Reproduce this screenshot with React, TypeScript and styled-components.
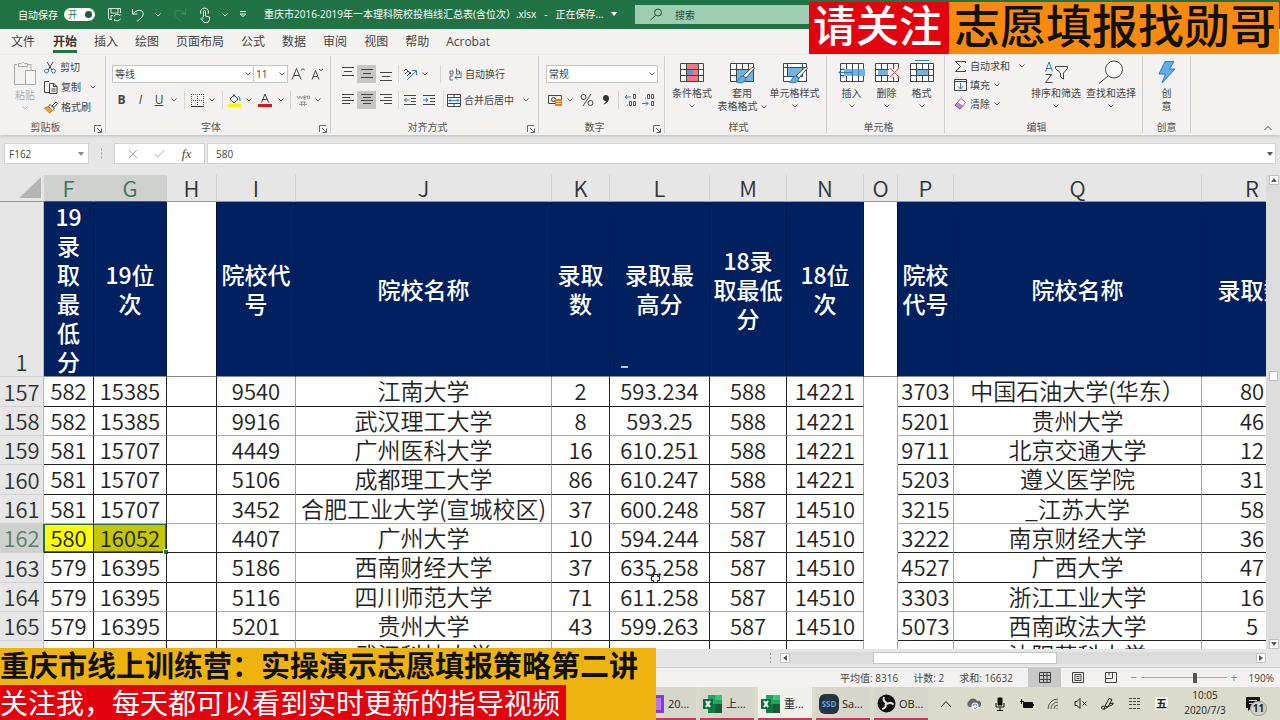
import React from "react";
import styled, { createGlobalStyle, css } from "styled-components";

const UI = '"Open Sans", "Noto Sans CJK SC", sans-serif';
const SHEET = '"Noto Sans CJK SC", "Noto Sans", sans-serif';

const Global = createGlobalStyle`
  *, *::before, *::after { box-sizing: border-box; }
  body { margin: 0; background: #e6e6e6; font-family: ${UI}; color: #444; }
  button, input, select { font: inherit; color: inherit; margin: 0; padding: 0; border: 0; background: none; border-radius: 0; }
  svg { display: block; flex: none; }
`;

const Shell = styled.div`
  position: relative;
  display: flex;
  flex-direction: column;
  height: 100vh;
  min-height: 480px;
  overflow: hidden;
  font-size: 10px;
  line-height: 14px;
`;

/* ---------- title bar ---------- */
const TitleBar = styled.header`
  flex: none;
  display: flex;
  align-items: center;
  height: 29px;
  padding-left: 18px;
  background: #217346;
  color: #fff;
  white-space: nowrap;
`;
const AutoSave = styled.label`
  display: flex;
  align-items: center;
  gap: 6px;
  margin-right: 8px;
`;
const Switch = styled.span`
  position: relative;
  display: flex;
  align-items: center;
  width: 31px;
  height: 13px;
  padding-left: 4px;
  border-radius: 7px;
  background: #fff;
  color: #217346;
  font-size: 9px;
  input {
    position: absolute;
    right: 3px;
    top: 3px;
    width: 7px;
    height: 7px;
    appearance: none;
    border-radius: 50%;
    background: #1d5c3a;
  }
`;
const TitleButton = styled.button<{ $w: number; $dim?: boolean }>`
  display: flex;
  align-items: center;
  justify-content: center;
  width: ${(p) => p.$w}px;
  height: 20px;
  opacity: ${(p) => (p.$dim ? 0.15 : 1)};
`;
const FileTitle = styled.h1`
  flex: none;
  display: flex;
  align-items: center;
  gap: 8px;
  width: 384px;
  margin: 0;
  padding: 0 0 2px 13px;
  font-size: 10px;
  font-weight: 400;
`;
const Search = styled.label`
  flex: 1;
  display: flex;
  align-items: center;
  gap: 12px;
  max-width: 560px;
  height: 19px;
  padding-left: 15px;
  background: #9fcdb3;
  color: #1e4d34;
  input { width: 100%; outline: 0; }
  input::placeholder { color: #1e4d34; opacity: 1; }
`;

/* ---------- ribbon ---------- */
const Tabs = styled.nav`
  flex: none;
  display: flex;
  gap: 1px;
  height: 26px;
  padding-left: 3px;
  background: #f3f2f1;
`;
const Tab = styled.button<{ $on?: boolean }>`
  position: relative;
  padding: 0 8px 1px;
  font-size: 12px;
  line-height: 24px;
  ${(p) =>
    p.$on &&
    css`
      font-weight: 700;
      color: #333;
      &::after {
        content: "";
        position: absolute;
        left: 8px;
        right: 8px;
        bottom: 2px;
        height: 3px;
        background: #217346;
      }
    `}
  &:first-child { margin-right: 1px; }
`;
const Ribbon = styled.section`
  flex: none;
  position: relative;
  display: flex;
  height: 80px;
  padding-top: 1px;
  background: #f3f2f1;
  box-shadow: 0 1px 3px #bbb;
`;
const Group = styled.div<{ $w: number }>`
  flex: none;
  position: relative;
  display: flex;
  flex-direction: column;
  width: ${(p) => p.$w}px;
  height: 77px;
  border-right: 1px solid #cfcecd;
`;
const GroupBody = styled.div<{ $pad: number }>`
  flex: 1;
  display: flex;
  min-height: 0;
  padding-left: ${(p) => p.$pad}px;
`;
const GroupName = styled.div<{ $narrow?: boolean }>`
  flex: none;
  height: 14px;
  margin-bottom: -1px;
  padding-right: ${(p) => (p.$narrow ? 0 : 14)}px;
  text-align: center;
  color: #555;
`;
const Launcher = styled.button`
  position: absolute;
  right: 3px;
  bottom: 0;
  width: 8px;
  height: 8px;
`;
const Collapse = styled.button`
  margin: auto 8px 4px auto;
`;
const Stack = styled.div<{ $top: number; $gap: number }>`
  display: flex;
  flex-direction: column;
  gap: ${(p) => p.$gap}px;
  padding-top: ${(p) => p.$top}px;
`;
const Row = styled.div`
  display: flex;
  align-items: center;
  height: 18px;
`;
const Tool = styled.button<{ $w: number; $on?: boolean }>`
  display: flex;
  align-items: center;
  justify-content: center;
  width: ${(p) => p.$w}px;
  height: 18px;
  background: ${(p) => (p.$on ? "#c6c5c4" : "none")};
  font-size: 12px;
`;
const LineTool = styled.button<{ $wide?: boolean }>`
  display: flex;
  align-items: center;
  gap: 3px;
  height: 18px;
  white-space: nowrap;
  > svg:nth-of-type(2) { margin-left: ${(p) => (p.$wide ? 6 : 1)}px; }
`;
const Rule = styled.span<{ $w: number }>`
  width: ${(p) => p.$w}px;
  height: 18px;
  background: linear-gradient(#d8d7d6, #d8d7d6) center / 1px 100% no-repeat;
`;
const BigTool = styled.button<{ $w: number; $dim?: boolean }>`
  display: flex;
  flex-direction: column;
  align-items: center;
  width: ${(p) => p.$w}px;
  padding-top: 4px;
  white-space: nowrap;
  line-height: 13px;
  opacity: ${(p) => (p.$dim ? 0.4 : 1)};
  > svg:first-child { margin-bottom: 3px; }
  > svg:last-child { margin-top: 4px; }
  span span { display: inline-flex; vertical-align: middle; margin-left: 3px; }
`;
const Picker = styled.label<{ $w: number }>`
  position: relative;
  display: flex;
  align-items: center;
  width: ${(p) => p.$w}px;
  height: 18px;
  border: 1px solid #c8c6c4;
  background: #fff;
  & + & { border-left: 0; }
  select {
    width: 100%;
    height: 16px;
    padding-left: 2px;
    appearance: none;
    outline: 0;
  }
  svg { position: absolute; right: 2px; pointer-events: none; }
`;

/* ---------- formula bar ---------- */
const FormulaBar = styled.section`
  flex: none;
  display: flex;
  height: 40px;
  padding: 8px 4px 11px;
`;
const White = styled.div<{ $w?: number }>`
  display: flex;
  align-items: center;
  flex: ${(p) => (p.$w ? "none" : "1")};
  width: ${(p) => (p.$w ? p.$w + "px" : "auto")};
  padding: 0 4px;
  border: 1px solid #d2d2d2;
  background: #fff;
  input { flex: 1; min-width: 0; outline: 0; }
`;
const FormulaBox = styled(White)`
  margin-left: 2px;
  padding: 0 2px 0 8px;
`;
const Grip = styled.div`
  width: 25px;
  margin: 4px 0;
  background: radial-gradient(circle, #a5a5a5 1px, transparent 1px) center / 25px 4px;
`;
const FxButton = styled.button`
  display: flex;
  justify-content: center;
  width: 30px;
`;
const Fx = styled.i`
  font-family: "Liberation Serif", serif;
  font-size: 13px;
`;

/* ---------- sheet ---------- */
const SheetArea = styled.main`
  flex: 1;
  display: flex;
  min-height: 0;
`;
const SheetView = styled.div`
  flex: 1;
  min-width: 0;
  overflow: hidden;
`;
const Grid = styled.table`
  width: 1303px;
  table-layout: fixed;
  border-collapse: separate;
  border-spacing: 0;
  background: #fff;
  color: #222;
  font-family: ${SHEET};
  font-size: 23px;
  font-weight: 350;
  line-height: 27px;
  white-space: nowrap;
  text-align: center;
`;
const ColHead = styled.th<{ $sel?: boolean }>`
  height: 27px;
  padding: 0;
  border-right: 1px solid #d0d0d0;
  border-bottom: 1px solid ${(p) => (p.$sel ? "#217346" : "#999")};
  background: ${(p) => (p.$sel ? "#cfd1cf" : "#e6e6e6")};
  color: ${(p) => (p.$sel ? "#41705a" : "#333")};
  font-size: 22px;
  font-weight: 350;
  line-height: 24px;
  vertical-align: top;
`;
const Corner = styled(ColHead)`
  border-right: 0;
  vertical-align: middle;
  svg { margin: 0 2px 0 auto; }
`;
const RowHead = styled.th<{ $sel?: boolean }>`
  padding: 0 0 1px;
  border-right: 1px solid ${(p) => (p.$sel ? "#217346" : "#bbb")};
  border-bottom: 1px solid #d0d0d0;
  background: ${(p) => (p.$sel ? "#cfd1cf" : "#e6e6e6")};
  color: ${(p) => (p.$sel ? "#5c7f6d" : "#333")};
  font-weight: 350;
  font-size: 22px;
  vertical-align: bottom;
`;
const Field = styled.th<{ $blank?: boolean }>`
  position: relative;
  height: 175px;
  padding: 0;
  border-right: 1px solid ${(p) => (p.$blank ? "#001030" : "#001a4c")};
  border-bottom: 1px solid #888;
  background: ${(p) => (p.$blank ? "#fff" : "#002060")};
  color: #fff;
  font-weight: 500;
  line-height: 29px;
  white-space: pre-line;
`;
const Dash = styled.i`
  position: absolute;
  left: 11px;
  bottom: 8px;
  width: 7px;
  height: 2px;
  background: #b8c6e0;
`;
const Cell = styled.td<{ $soft?: boolean; $num?: boolean; $open?: boolean }>`
  position: relative;
  padding: 0;
  border-right: 1px solid ${(p) => (p.$soft ? "#a4a4a4" : "#222")};
  border-bottom: 1px solid ${(p) => (p.$open ? "transparent" : "#222")};
  font-size: ${(p) => (p.$num ? 22 : 23)}px;
  vertical-align: top;
`;
const Line = styled.tr`
  height: 29px;
  &:nth-child(3n + 1) { height: 30px; }
  &:nth-child(3n + 2) td { border-bottom-color: #aaa; }
  &:nth-child(3n + 2) td:nth-child(11) { border-bottom-color: transparent; }
`;
const ActiveCell = styled(Cell)`
  background: #ff0;
  box-shadow: inset 1px 1px #217346, inset 0 -1px #217346;
`;
const PickedCell = styled(Cell)`
  background: #c6c600;
  box-shadow: inset 0 1px #217346, inset -1px -1px #217346;
  &::after {
    content: "";
    position: absolute;
    right: -2px;
    bottom: -2px;
    width: 4px;
    height: 4px;
    background: #217346;
    outline: 1px solid #fff;
  }
`;
const Pointer = styled.svg`
  position: absolute;
  left: 40px;
  top: 20px;
  z-index: 1;
`;
const VScroll = styled.div`
  flex: none;
  display: flex;
  flex-direction: column;
  align-items: center;
  width: 14px;
  padding-left: 1px;
  background: #dcdcdc;
`;
const ScrollButton = styled.button`
  flex: none;
  display: flex;
  align-items: center;
  justify-content: center;
  width: 10px;
  height: 10px;
  border: 1px solid #c0c0c0;
  background: #fff;
`;
const VTrack = styled.div`
  flex: 1;
  display: flex;
  padding-top: 186px;
  &::before {
    content: "";
    width: 9px;
    height: 10px;
    border: 1px solid #bbb;
    background: #fff;
  }
`;
const HScroll = styled.div`
  flex: none;
  display: flex;
  align-items: center;
  height: 19px;
  padding-right: 14px;
  border-bottom: 1px solid #cfcfcf;
`;
const HGrip = styled.span`
  flex: none;
  width: 61%;
  margin-right: 8px;
  height: 12px;
  background: radial-gradient(circle, #999 1px, transparent 1px) right center / 3px 4px repeat-y;
`;
const HTrack = styled.div`
  flex: 1;
  height: 12px;
  padding-left: 83px;
  background: #dcdcdc;
  &::before {
    content: "";
    display: block;
    width: 48%;
    height: 12px;
    border: 1px solid #c4c4c4;
    background: #fff;
  }
`;

/* ---------- status bar ---------- */
const Status = styled.footer`
  flex: none;
  display: flex;
  justify-content: flex-end;
  align-items: center;
  height: 19px;
  padding-right: 6px;
  background: #f3f2f1;
  white-space: nowrap;
`;
const Stat = styled.span`
  margin-right: 15px;
`;
const ViewButton = styled.button<{ $on?: boolean }>`
  display: flex;
  align-items: center;
  justify-content: center;
  width: 33px;
  height: 19px;
  background: ${(p) => (p.$on ? "#c8c8c8" : "none")};
`;
const ZoomStep = styled.button`
  width: 14px;
  font-size: 12px;
  color: #888;
`;
const Zoom = styled.input`
  width: 86px;
  height: 12px;
  appearance: none;
  background: linear-gradient(#aaa, #aaa) center / 100% 1px no-repeat;
  &::-webkit-slider-thumb { appearance: none; width: 4px; height: 10px; background: #555; }
`;
const Percent = styled.output`
  width: 33px;
  text-align: right;
`;

/* ---------- taskbar ---------- */
const Taskbar = styled.nav`
  flex: none;
  display: flex;
  justify-content: flex-end;
  height: 33px;
  background: #dadbcb;
  color: #222;
`;
const TaskButton = styled.button<{ $on?: boolean }>`
  display: flex;
  align-items: center;
  gap: 3px;
  width: 54px;
  margin-right: 4px;
  padding-left: 3px;
  background: ${(p) => (p.$on ? "#f1f1eb" : "#d6d6cb")};
  box-shadow: inset 0 -2px #c8385c;
  font-size: 11px;
  white-space: nowrap;
`;
const Tray = styled.button`
  display: flex;
  align-items: center;
  justify-content: center;
  width: 27px;
`;
const ImeBadge = styled.span`
  width: 13px;
  background: #f4f4ee;
  font-size: 11px;
  font-weight: 700;
  line-height: 13px;
`;
const Clock = styled.time`
  width: 60px;
  padding-top: 1px;
  text-align: center;
  line-height: 15px;
`;
const Notices = styled.button`
  position: relative;
  display: flex;
  align-items: center;
  width: 45px;
  padding-left: 11px;
  b {
    position: absolute;
    left: 15px;
    top: 14px;
    width: 17px;
    height: 15px;
    border: 1px solid #999;
    border-radius: 8px;
    background: #d0d1c6;
    line-height: 13px;
  }
`;

/* ---------- captions laid over the recording ---------- */
const TopCaption = styled.div`
  position: absolute;
  top: 2px;
  right: 1px;
  display: flex;
  height: 52px;
  font-family: ${SHEET};
  line-height: 43px;
  white-space: nowrap;
`;
const Follow = styled.strong`
  width: 140px;
  padding-left: 4px;
  background: #e2030f;
  color: #fff;
  font-size: 43px;
  font-weight: 500;
`;
const Finder = styled.strong`
  width: 330px;
  padding-left: 5px;
  background: #f98a10;
  color: #111;
  font-size: 46px;
  font-weight: 500;
`;
const BottomCaption = styled.div`
  position: absolute;
  left: 0;
  bottom: 0;
  width: 656px;
  height: 72px;
  overflow: hidden;
  background: #efb310;
  font-family: ${SHEET};
  white-space: nowrap;
`;
const Course = styled.p`
  margin: 0;
  height: 37px;
  color: #111;
  font-size: 29px;
  font-weight: 700;
  line-height: 33px;
`;
const Promo = styled.p`
  margin: 0;
  width: 566px;
  height: 35px;
  background: #e2030f;
  color: #fff;
  font-size: 28px;
  font-weight: 400;
  line-height: 35px;
`;

/* ---------- drawings ---------- */
type IcProps = { w: number; h: number; s?: string; sw?: number; children: React.ReactNode };
const Ic = ({ w, h, s = "#444", sw = 1, children }: IcProps) => (
  <svg width={w} height={h} viewBox={`0 0 ${w} ${h}`} fill="none" stroke={s} strokeWidth={sw} aria-hidden="true">
    {children}
  </svg>
);
const Chev = ({ c = "#555" }: { c?: string }) => (
  <Ic w={6} h={4} s={c}><path d="M.5.5 3 3 5.5.5" /></Ic>
);
const Caret = ({ d = "M0 0h6L3 4z", w = 6, h = 4, c = "#555" }) => (
  <Ic w={w} h={h} s="none"><path d={d} fill={c} /></Ic>
);
const LaunchIcon = () => (
  <Ic w={8} h={8} s="#666"><path d="M.5 7V.5H7M3 3l4 4M7.500 3.500v4h-4" /></Ic>
);
const Lines = ({ y }: { y: number }) => (
  <Ic w={14} h={16}><path d={`M1 ${y + 0.5}h12M3 ${y + 4.5}h8M1 ${y + 8.5}h12`} /></Ic>
);
const Rows3 = ({ k }: { k: "l" | "c" | "r" }) => {
  const sh = { l: [1, 9], c: [3, 11], r: [5, 13] }[k];
  return <Ic w={14} h={14}><path d={`M1 1.500h12M${sh[0]} 4.500H${sh[1]}M1 7.500h12M${sh[0]} 10.500H${sh[1]}`} /></Ic>;
};
const Indent = ({ out }: { out?: boolean }) => (
  <Ic w={14} h={13}>
    <path d="M1 1.500h12M8 4.500h5M8 7.500h5M1 10.500h12" />
    <path stroke="#2b7cc4" d={out ? "M6.500 6h-5M3.500 4l-2 2 2 2" : "M1 6h5M4 4l2 2-2 2"} />
  </Ic>
);
const TableGrid = ({ children }: { children?: React.ReactNode }) => (
  <Ic w={28} h={24}>
    <path fill="#fff" d="M2.500 3.500h23v18h-23z" />
    <path d="M2.500 9.500h23M2.500 15.500h23M8.500 3.500v18M14.500 3.500v18M20.500 3.500v18" />
    {children}
  </Ic>
);
const Brush = () => (
  <g>
    <path d="M26.500 8 18 18l-3-2L24 7.500q2-1 2.500.5z" fill="#fff" stroke="#444" />
    <path d="M15 16q-3 0-4 3-1 3-3 3 6 2 9-1 1-2 1-3z" fill="#6aaee0" stroke="#2b7cc4" />
  </g>
);
const ExcelIcon = () => (
  <Ic w={20} h={18} s="none">
    <path fill="#21a366" d="M5 0h14v18H5z" /><path fill="#33c481" d="M12 0h7v5h-7z" />
    <path fill="#107c41" d="M5 9h7v9H5z" /><path fill="#185c37" d="M12 9h7v9h-7z" />
    <path fill="#0d7040" d="M0 4h10v10H0z" /><path d="m3 6 4 6M7 6l-4 6" stroke="#fff" strokeWidth="2" />
  </Ic>
);

/* ---------- data ---------- */
const letters = "FGHIJKLMNOPQR".split("");
const widths = [44, 50, 73, 50, 79, 256, 58, 100, 77, 77, 34, 56, 248, 101];
const soft = new Set([3, 4, 8, 9, 10, 11]);
const fields = ["19\n录\n取\n最\n低\n分", "19位\n次", "", "院校代\n号", "院校名称", "录取\n数", "录取最\n高分", "18录\n取最低\n分", "18位\n次", "", "院校\n代号", "院校名称", "录取数"];
const rows: [number, string[]][] = [
  [157, ["582", "15385", "", "9540", "江南大学", "2", "593.234", "588", "14221", "", "3703", "中国石油大学(华东）", "80"]],
  [158, ["582", "15385", "", "9916", "武汉理工大学", "8", "593.25", "588", "14221", "", "5201", "贵州大学", "46"]],
  [159, ["581", "15707", "", "4449", "广州医科大学", "16", "610.251", "588", "14221", "", "9711", "北京交通大学", "12"]],
  [160, ["581", "15707", "", "5106", "成都理工大学", "86", "610.247", "588", "14221", "", "5203", "遵义医学院", "31"]],
  [161, ["581", "15707", "", "3452", "合肥工业大学(宣城校区)", "37", "600.248", "587", "14510", "", "3215", "_江苏大学", "58"]],
  [162, ["580", "16052", "", "4407", "广州大学", "10", "594.244", "587", "14510", "", "3222", "南京财经大学", "36"]],
  [163, ["579", "16395", "", "5186", "西南财经大学", "37", "635.258", "587", "14510", "", "4527", "广西大学", "47"]],
  [164, ["579", "16395", "", "5116", "四川师范大学", "71", "611.258", "587", "14510", "", "3303", "浙江工业大学", "16"]],
  [165, ["579", "16395", "", "5201", "贵州大学", "43", "599.263", "587", "14510", "", "5073", "西南政法大学", "5"]],
  [166, ["", "", "", "", "武汉科技大学", "", "", "", "", "", "", "沈阳药科大学", ""]],
];

const Title = () => (
  <TitleBar>
    <AutoSave>自动保存<Switch>开<input type="checkbox" defaultChecked /></Switch></AutoSave>
    <TitleButton $w={22} aria-label="保存">
      <Ic w={15} h={15} s="#d5ebde"><path d="M5 12.500H2.500L1.500 11V1.500h12V6M4 1.500V6h7V1.500M4 12V8.500h2" /><path d="M7 9.500a3.500 3.500 0 0 1 6-1V7M13.500 11.500a3.500 3.500 0 0 1-6 1V14" /></Ic>
    </TitleButton>
    <TitleButton $w={26} aria-label="撤消">
      <Ic w={14} h={14} s="#e8f4ed"><path d="M1.500 1v5h5M1.500 6Q7 .5 11 3q3 3-1 7l-4 3.500" /></Ic>
    </TitleButton>
    <TitleButton $w={14} aria-label="撤消选项"><Chev c="#e8f4ed" /></TitleButton>
    <TitleButton $w={30} $dim aria-label="恢复">
      <Ic w={14} h={14} s="#fff"><path d="M12.500 1v5h-5M12.500 6Q7 .5 3 3q-3 3 1 7l4 3.500" /></Ic>
    </TitleButton>
    <TitleButton $w={20} aria-label="触摸模式">
      <Ic w={12} h={16} s="#e8f4ed"><path d="M2 7a4 4 0 1 1 7 0M4.500 10V4.500a1 1 0 0 1 2 0V9l4 1v2.500L9 15.500H5L2 11.500l1-1 1.500 1" /></Ic>
    </TitleButton>
    <TitleButton $w={20} aria-label="模式选项"><Chev c="#e8f4ed" /></TitleButton>
    <TitleButton $w={16} aria-label="自定义快速访问工具栏">
      <Ic w={8} h={7} s="#e8f4ed"><path d="M1 .5h6M1 3l3 2.500L7 3z" /></Ic>
    </TitleButton>
    <FileTitle>
      <span>重庆市2016-2019年一本理科院校投档线汇总表(含位次）.xlsx</span><span>-</span>
      <span>正在保存...</span><Caret c="#fff" w={6} h={4} />
    </FileTitle>
    <Search>
      <Ic w={13} h={13} s="#1e4d34"><circle cx="8" cy="4.500" r="3.500" /><path d="M5.500 7.500.5 12" /></Ic>
      <input type="search" placeholder="搜索" aria-label="搜索" />
    </Search>
  </TitleBar>
);

const GroupEnd = ({ name, launch }: { name: string; launch?: boolean }) => (
  <>
    <GroupName>{name}</GroupName>
    {launch && <Launcher aria-label={`${name}设置`}><LaunchIcon /></Launcher>}
  </>
);

const RibbonBar = () => (
  <Ribbon>
    <Group $w={106}>
      <GroupBody $pad={6}>
        <BigTool $w={38} $dim>
          <Ic w={26} h={26}><path d="M5 4.500H2.500v20H13M16 4.500h3V10M6.500 6.500v-3h3q1.500-3 3 0h3v3z" /><path fill="#fff" d="M13.500 10.500h10v14h-10z" /></Ic>
          粘贴<Chev />
        </BigTool>
        <Stack $top={2} $gap={2}>
          <LineTool>
            <Ic w={13} h={13}><path d="m3 1 5 8M9 1 4 9" /><circle cx="2.500" cy="10" r="2" stroke="#2b7cc4" /><circle cx="9.500" cy="10" r="2" stroke="#2b7cc4" /></Ic>剪切
          </LineTool>
          <LineTool $wide>
            <Ic w={14} h={13}><path d="M5 11.500H.5V.5H5M5.500 2.500H10l3 3v7H5.500zM9.500 2.500v3H13M7.500 8h4M7.500 10h4" /></Ic>复制<Chev />
          </LineTool>
          <LineTool>
            <Ic w={14} h={13}><path fill="#fff" d="m8 5 4-4 1.500 1.500-3.500 4z" /><path fill="#fff" d="m6 3.500 4.500 4.500-2 1.500-4-4z" /><path fill="#f0a441" stroke="#c47a1c" d="M4 5.500.5 7l5 5 3-2.500z" /></Ic>格式刷
          </LineTool>
        </Stack>
      </GroupBody>
      <GroupEnd name="剪贴板" launch />
    </Group>

    <Group $w={225}>
      <GroupBody $pad={6}>
        <Stack $top={9} $gap={8}>
          <Row>
            <Picker $w={142}><select aria-label="字体"><option>等线</option></select><Chev /></Picker>
            <Picker $w={34}><select aria-label="字号"><option>11</option></select><Chev /></Picker>
            <Tool $w={20} aria-label="增大字号"><Ic w={14} h={14}><path d="M1 12.500 5.500 1.500 10 12.500M2.500 8.500h6M10 3.500l2-2 2 2" /></Ic></Tool>
            <Tool $w={18} aria-label="减小字号"><Ic w={14} h={14}><path d="M2 12.500 5.500 3.500 9 12.500M3.500 9.500h4M9 2l2 1.500L13 2" /></Ic></Tool>
          </Row>
          <Row>
            <Tool $w={19}><b>B</b></Tool><Tool $w={19}><em>I</em></Tool><Tool $w={18}><u>U</u></Tool><Tool $w={12} aria-label="下划线选项"><Chev /></Tool>
            <Rule $w={8} />
            <Tool $w={18} aria-label="边框"><Ic w={13} h={13} s="#555"><path strokeDasharray="1 1" d="M.5 0v12M12.500 0v12M6.500 0v12M0 .5h13M0 6.500h13" /><path stroke="#333" d="M0 12.500h13" /></Ic></Tool>
            <Tool $w={12} aria-label="边框选项"><Chev /></Tool>
            <Rule $w={8} />
            <Tool $w={17} aria-label="填充颜色"><Ic w={14} h={14}><path fill="#fff" d="M6 1v3M2 6l4-4 4 4-4 4z" /><path stroke="#2b7cc4" d="M10 3q2.500 1 2 5" /><path stroke="none" fill="#f5f500" d="M0 11h13v3H0z" /></Ic></Tool>
            <Tool $w={12} aria-label="填充选项"><Chev /></Tool>
            <Tool $w={20} aria-label="字体颜色"><Ic w={14} h={14}><path d="M3.500 9.500 7 1l3.500 8.500M4.500 6.500h5" /><path stroke="none" fill="#e01020" d="M0 11h14v3H0z" /></Ic></Tool>
            <Tool $w={12} aria-label="字体颜色选项"><Chev /></Tool>
            <Rule $w={7} />
            <Tool $w={18} aria-label="拼音"><Ic w={14} h={13} s="#999"><path d="m1 2 1.500 3L4 2l1.500 3L7 2M7.500 3.500h2.500V2H8v3h2M11.500 5V2h2v3M4 8h6M3 10.500h8M5.500 8v4M8.500 8v4" /></Ic></Tool>
            <Tool $w={12} aria-label="拼音选项"><Chev /></Tool>
          </Row>
        </Stack>
      </GroupBody>
      <GroupEnd name="字体" launch />
    </Group>

    <Group $w={208}>
      <GroupBody $pad={7}>
        <Stack $top={9} $gap={8}>
          <Row>
            <Tool $w={19} aria-label="顶端对齐"><Lines y={1} /></Tool>
            <Tool $w={19} $on aria-label="垂直居中"><Lines y={3} /></Tool>
            <Tool $w={19} aria-label="底端对齐"><Lines y={6} /></Tool>
            <Rule $w={6} />
            <Tool $w={18} aria-label="方向"><Ic w={14} h={14}><path d="m1 4 2-2 5 5M2 7l3-3M4 9l4-4" /><path stroke="#2b7cc4" d="M4 13 13 4M9 3.500h4.500V8" /></Ic></Tool>
            <Tool $w={12} aria-label="方向选项"><Chev /></Tool>
            <Rule $w={18} />
            <LineTool>
              <Ic w={13} h={13} s="#666"><path d="M1 5.500V3h3v3H1zM7.500.5V6h3V3h-3M4 8H1v4h3" /><path stroke="#2b7cc4" d="M12 3.500v6H6M8 7.500l-2 2 2 2" /></Ic>自动换行
            </LineTool>
          </Row>
          <Row>
            <Tool $w={19} aria-label="左对齐"><Rows3 k="l" /></Tool>
            <Tool $w={19} $on aria-label="居中"><Rows3 k="c" /></Tool>
            <Tool $w={19} aria-label="右对齐"><Rows3 k="r" /></Tool>
            <Rule $w={6} />
            <Tool $w={18} aria-label="减少缩进"><Indent out /></Tool>
            <Tool $w={20} aria-label="增加缩进"><Indent /></Tool>
            <Rule $w={8} />
            <LineTool $wide>
              <Ic w={14} h={13}><path fill="#fff" d="M.5.5h13v12H.5z" /><path d="M.5 3.500h13M.5 9.500h13M7 0v3.500M7 9.500V12" /><path stroke="#2b7cc4" d="M2 6.500h10M4 4.500l-2 2 2 2M10 4.500l2 2-2 2" /></Ic>合并后居中<Chev />
            </LineTool>
          </Row>
        </Stack>
      </GroupBody>
      <GroupEnd name="对齐方式" launch />
    </Group>

    <Group $w={126}>
      <GroupBody $pad={7}>
        <Stack $top={9} $gap={8}>
          <Row><Picker $w={112}><select aria-label="数字格式"><option>常规</option></select><Chev /></Picker></Row>
          <Row>
            <Tool $w={18} aria-label="会计格式"><Ic w={15} h={13}><path d="M.5 1.500h13v8H.5z" /><circle cx="5.500" cy="5.500" r="2" /><path stroke="#e08020" fill="#f8d8b0" d="M7.500 6.500h6M7.500 8.500h6M7.500 10.500h6M7.500 5.500h6v6h-6z" /></Ic></Tool>
            <Tool $w={12} aria-label="会计选项"><Chev /></Tool>
            <Tool $w={22} aria-label="百分比"><Ic w={14} h={14}><circle cx="3.500" cy="4" r="2.500" /><circle cx="10.500" cy="10" r="2.500" /><path d="M11 1 3 13" /></Ic></Tool>
            <Tool $w={16} aria-label="千位分隔"><Ic w={8} h={10} s="none"><path fill="#333" d="M4 0q3 0 3 3.500T2 9.500L1.500 9Q4 7.500 4 6 1 6 1 3t3-3z" /></Ic></Tool>
            <Rule $w={8} />
            <Tool $w={18} aria-label="增加小数位"><Ic w={14} h={14} s="#555"><path stroke="#2b7cc4" d="M7 4H1M3 2 1 4l2 2" /><path d="M9.500 1.500h2v4h-2zM5.500 8.500h2v4h-2zM9.500 8.500h2v4h-2zM3 12h1" /></Ic></Tool>
            <Tool $w={18} aria-label="减少小数位"><Ic w={14} h={14} s="#555"><path stroke="#2b7cc4" d="M0 10.500h6M4 8.500l2 2-2 2" /><path d="M5.500 1.500h2v4h-2zM9.500 1.500h2v4h-2zM9.500 8.500h2v4h-2zM3 5h1" /></Ic></Tool>
          </Row>
        </Stack>
      </GroupBody>
      <GroupEnd name="数字" launch />
    </Group>

    <Group $w={162}>
      <GroupBody $pad={2}>
        <BigTool $w={50}>
          <TableGrid><path stroke="none" fill="#f4777f" d="M9 4h11v5H9zM9 16h11v5H9zM15 10h5v5h-5z" /><path stroke="none" fill="#6c92cf" d="M9 10h6v5H9z" /></TableGrid>
          条件格式<Chev />
        </BigTool>
        <BigTool $w={50}>
          <TableGrid><path stroke="none" fill="#74b2e2" d="M9 10h16v11H9z" /><Brush /></TableGrid>
          <span>套用</span><span>表格格式<span><Chev /></span></span>
        </BigTool>
        <BigTool $w={55}>
          <Ic w={28} h={24}><path fill="#fff" d="M2.500 3.500h23v18h-23z" /><path fill="#74b2e2" stroke="#444" d="M6.500 7.500h15v9h-15z" /><path d="M6.500 3.500v4M21.500 3.500v4M2.500 7.500h4M2.500 16.500h4M21.500 7.500h4" /><Brush /></Ic>
          单元格样式<Chev />
        </BigTool>
      </GroupBody>
      <GroupEnd name="样式" />
    </Group>

    <Group $w={118}>
      <GroupBody $pad={7}>
        <BigTool $w={35}>
          <TableGrid><path stroke="none" fill="#74b2e2" d="M6 9h21v7H6z" /><path stroke="#2b7cc4" d="M14 12.500H1M6 7.500l-5 5 5 5M14.500 9v7M20.500 9v7" /></TableGrid>
          插入<Chev />
        </BigTool>
        <BigTool $w={35}>
          <TableGrid><path stroke="none" fill="#74b2e2" d="M5 10h10v5H5z" /><path stroke="none" fill="#f3f2f1" d="M16 9h11v8H16z" /><path stroke="#e0443c" d="m17 8 9 9M26 8l-9 9" /></TableGrid>
          删除<Chev />
        </BigTool>
        <BigTool $w={35}>
          <TableGrid><path stroke="none" fill="#74b2e2" d="M9 10h11v5H9z" /><path stroke="#2b7cc4" d="M7 .5h14" /></TableGrid>
          格式<Chev />
        </BigTool>
      </GroupBody>
      <GroupEnd name="单元格" />
    </Group>

    <Group $w={198}>
      <GroupBody $pad={9}>
        <Stack $top={1} $gap={1}>
          <LineTool $wide>
            <Ic w={13} h={13}><path d="M11.500 3V1.500h-10l5 5-5 5h10V10" /></Ic>自动求和<Chev />
          </LineTool>
          <LineTool>
            <Ic w={13} h={12}><path d="M.5.5h12v11H.5zM.5 2.500h12" /><path stroke="#2b7cc4" d="M6.500 4v6M4 7.500l2.500 2.500L9 7.500" /></Ic>填充<Chev />
          </LineTool>
          <LineTool>
            <Ic w={13} h={12} s="#a04cb4"><path fill="#fff" d="m1 7 6-6.500 4.500 4L6 11z" /><path fill="#c58ad2" d="m1 7 2.500-2.500L8.500 8.500 6 11z" /></Ic>清除<Chev />
          </LineTool>
        </Stack>
        <BigTool $w={62}>
          <Ic w={28} h={24}><path stroke="#2b7cc4" d="M3.500 11.500 7 2l3.500 9.500M4.500 8.500h5" /><path d="M3.500 14.500h6l-6 8h7M13.500 6.500h12v2l-4 4.500v6l-3-2v-4l-5-4.500z" /></Ic>
          排序和筛选<Chev />
        </BigTool>
        <BigTool $w={48}>
          <Ic w={26} h={24}><circle cx="16" cy="9.500" r="8.500" fill="#f9f9f8" /><path d="M10 16 1 23.500" /></Ic>
          查找和选择<Chev />
        </BigTool>
      </GroupBody>
      <GroupEnd name="编辑" />
    </Group>

    <Group $w={48}>
      <GroupBody $pad={0}>
        <BigTool $w={47}>
          <Ic w={22} h={24} s="#2b7cc4"><path fill="#62aee8" d="M9 1.500h9L13.500 9H19L6 23 9.500 14H3z" /></Ic>
          <span>创</span><span>意</span>
        </BigTool>
      </GroupBody>
      <GroupName $narrow>创意</GroupName>
    </Group>
    <Collapse aria-label="折叠功能区"><Ic w={8} h={6}><path d="M.5 5 4 1.500 7.500 5" /></Ic></Collapse>
  </Ribbon>
);

const Sheet = () => (
  <SheetArea>
    <SheetView>
      <Grid>
        <colgroup>{widths.map((w, i) => <col key={i} width={w} />)}</colgroup>
        <thead>
          <tr>
            <Corner aria-label="全选"><Ic w={24} h={22} s="none"><path fill="#b5b5b5" d="M23 0v21H1z" /></Ic></Corner>
            {letters.map((l, i) => <ColHead key={l} $sel={i < 2}>{l}</ColHead>)}
          </tr>
          <tr>
            <RowHead>1</RowHead>
            {fields.map((f, i) => <Field key={i} $blank={!f}>{f}{i === 6 && <Dash />}</Field>)}
          </tr>
        </thead>
        <tbody>
          {rows.map(([n, cells]) => (
            <Line key={n}>
              <RowHead $sel={n === 162}>{n < 166 && n}</RowHead>
              {cells.map((c, i) => {
                if (n === 162 && i === 0) return <ActiveCell key={i} $num>{c}</ActiveCell>;
                if (n === 162 && i === 1) return <PickedCell key={i} $num>{c}</PickedCell>;
                return (
                  <Cell key={i} $soft={soft.has(i)} $open={i === 9} $num={/^[\d.]+$/.test(c)}>
                    {c}
                    {n === 163 && i === 6 && (
                      <Pointer width="11" height="11" viewBox="0 0 11 11">
                        <path d="M3.500 1.500h4v2h2v4h-2v2h-4v-2h-2v-4h2z" fill="#fff" stroke="#111" />
                      </Pointer>
                    )}
                  </Cell>
                );
              })}
            </Line>
          ))}
        </tbody>
      </Grid>
    </SheetView>
    <VScroll>
      <ScrollButton aria-label="向上滚动"><Caret d="M0 4h6L3 0z" /></ScrollButton>
      <VTrack />
      <ScrollButton aria-label="向下滚动"><Caret /></ScrollButton>
    </VScroll>
  </SheetArea>
);

const Desktop = () => (
  <Taskbar>
    <TaskButton><Ic w={20} h={18} s="none"><path fill="#8a3fc8" d="M0 0h19v18H0z" /><path fill="#b57be6" d="M11 3h5v12h-5z" /></Ic>20...</TaskButton>
    <TaskButton><ExcelIcon />上...</TaskButton>
    <TaskButton $on><ExcelIcon />重...</TaskButton>
    <TaskButton>
      <Ic w={20} h={20} s="none"><rect width="20" height="20" rx="6" fill="#26323f" /><text x="10" y="13" textAnchor="middle" fontSize="8" fontWeight="700" fill="#52a8e0">SSD</text></Ic>Sa...
    </TaskButton>
    <TaskButton>
      <Ic w={19} h={19} s="#e8e8e8">
        <circle cx="9.500" cy="9.500" r="9" fill="#111" stroke="none" />
        {[0, 120, 240].map((a) => (
          <path key={a} transform={`rotate(${a} 9.5 9.5)`} strokeWidth="2" d="M9.500 8.500Q5.500 7 7 3" />
        ))}
        <circle cx="9.500" cy="9.500" r="1.500" fill="#e8e8e8" stroke="none" />
      </Ic>OB...
    </TaskButton>
    <Tray aria-label="显示隐藏的图标"><Ic w={12} h={8} s="#222"><path d="M1 7l5-5.500L11 7" /></Ic></Tray>
    <Tray aria-label="云同步"><Ic w={16} h={13} s="none"><path fill="#666" d="M4 10a3.500 3.500 0 0 1 0-6 4.500 4.500 0 0 1 8 0 3 3 0 0 1 2 6z" /><circle cx="10" cy="9" r="3.500" fill="#fff" /><path stroke="#4a7ab8" d="M8 9a2 2 0 0 1 4 0M12 10a2 2 0 0 1-3 1" /></Ic></Tray>
    <Tray aria-label="麦克风"><Ic w={10} h={14} s="#111"><path fill="#111" d="M3 1h4v7H3z" /><path d="M1 6v4h8V6M5 10v3M2 13.500h6" /></Ic></Tray>
    <Tray aria-label="电池"><Ic w={14} h={10} s="#111"><path fill="#111" d="M3.500 3.500h9v5h-9z" /><path d="M0 2.500h4M1.500 0v5M13.500 5v2" /></Ic></Tray>
    <Tray aria-label="网络"><Ic w={13} h={12} s="#555"><path d="M1 11A10 10 0 0 1 11 1M4 11a7 7 0 0 1 7-7M7 11a4 4 0 0 1 4-4M9.500 11l1-1" /></Ic></Tray>
    <Tray aria-label="静音"><Ic w={14} h={11} s="#222"><path d="M1 3.500h2l3-3v10l-3-3H1zM8.500 3.500l4 4M12.500 3.500l-4 4" /></Ic></Tray>
    <Tray aria-label="手写笔"><Ic w={15} h={14} s="#222"><path d="M5 9 9 1.500l3 1L8 10zM5 9l-1 3 4-2M9 7l4-1q1 1-1 2L8 9.500M4 9q-3 0-2.500 2T5 12" /></Ic></Tray>
    <Tray aria-label="触摸键盘"><Ic w={14} h={13} s="#444"><path strokeDasharray="3 1" d="M1 1.500h12M1 4.500h12M1 7.500h12M1 11.500h12" /></Ic></Tray>
    <Tray><ImeBadge>五</ImeBadge></Tray>
    <Clock>10:05<br />2020/7/3</Clock>
    <Notices aria-label="通知"><Ic w={14} h={14} s="none"><path fill="#111" d="M0 0h14v11H5l-3 3v-3H0z" /><path stroke="#ddd" d="M3 3.500h8M3 6.500h8" /></Ic><b>11</b></Notices>
  </Taskbar>
);

export default function App() {
  return (
    <Shell>
      <Global />
      <Title />
      <Tabs>
        {["文件", "开始", "插入", "绘图", "页面布局", "公式", "数据", "审阅", "视图", "帮助", "Acrobat"].map((t) => (
          <Tab key={t} $on={t === "开始"}>{t}</Tab>
        ))}
      </Tabs>
      <RibbonBar />
      <FormulaBar>
        <White $w={85}><input aria-label="名称框" defaultValue="F162" /><Caret w={6} h={4} c="#888" /></White>
        <Grip />
        <White $w={91}>
          <FxButton aria-label="取消"><Ic w={10} h={10} s="#aaa"><path d="m1 1 8 8M9 1 1 9" /></Ic></FxButton>
          <FxButton aria-label="输入"><Ic w={11} h={9} s="#aaa"><path d="m.5 5 3 3L10.500 1" /></Ic></FxButton>
          <FxButton aria-label="插入函数"><Fx>fx</Fx></FxButton>
        </White>
        <FormulaBox><input aria-label="编辑栏" defaultValue="580" /><Caret w={6} h={4} /></FormulaBox>
      </FormulaBar>
      <Sheet />
      <HScroll>
        <HGrip />
        <ScrollButton aria-label="向左滚动"><Caret d="M4 0v6L0 3z" w={4} h={6} /></ScrollButton>
        <HTrack />
        <ScrollButton aria-label="向右滚动"><Caret d="M0 0v6l4-3z" w={4} h={6} /></ScrollButton>
      </HScroll>
      <Status>
        <Stat>平均值: 8316</Stat><Stat>计数: 2</Stat><Stat>求和: 16632</Stat>
        <ViewButton $on aria-label="普通"><Ic w={12} h={11}><path d="M.5.5h11v10H.5zM.5 3.500h11M.5 7.500h11M4.500.5v10M8 .5v10" /></Ic></ViewButton>
        <ViewButton aria-label="页面布局"><Ic w={12} h={11}><path d="M.5.5h11v10H.5zM3 2.500h6v6H3zM4.500 4.500h3M4.500 6.500h3" /></Ic></ViewButton>
        <ViewButton aria-label="分页预览"><Ic w={12} h={11}><path d="M.5.5h11v10H.5zM.5 6.500h7v-6M4 .5v3" /></Ic></ViewButton>
        <ZoomStep aria-label="缩小">−</ZoomStep>
        <Zoom type="range" aria-label="显示比例" min={0} max={100} defaultValue={63} />
        <ZoomStep aria-label="放大">+</ZoomStep>
        <Percent>190%</Percent>
      </Status>
      <Desktop />
      <TopCaption><Follow>请关注</Follow><Finder>志愿填报找勋哥</Finder></TopCaption>
      <BottomCaption>
        <Course>重庆市线上训练营：实操演示志愿填报策略第二讲</Course>
        <Promo>关注我，每天都可以看到实时更新的指导视频</Promo>
      </BottomCaption>
    </Shell>
  );
}
